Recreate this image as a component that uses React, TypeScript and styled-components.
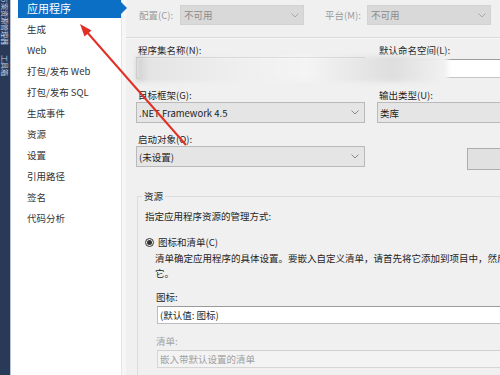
import React from "react";
import styled, { createGlobalStyle } from "styled-components";

const GlobalStyle = createGlobalStyle`
	html, body {
		margin: 0;
		padding: 0;
		background: #f0f0f0;
	}
	body {
		font-family: "Noto Sans CJK SC", "Noto Sans", sans-serif;
	}
`;

const navItems = [
	"应用程序",
	"生成",
	"Web",
	"打包/发布 Web",
	"打包/发布 SQL",
	"生成事件",
	"资源",
	"设置",
	"引用路径",
	"签名",
	"代码分析",
];

const Chevron = ({ color = "#888" }: { color?: string }) => (
	<svg width="8" height="5" viewBox="0 0 8 5">
		<polyline points="0.5,0.5 4,4 7.5,0.5" fill="none" stroke={color} strokeWidth="1" />
	</svg>
);

const App = () => {
	return (
		<>
			<GlobalStyle />
			<Window>
				<DockStrip>
					<DockTab>解决方案资源管理器</DockTab>
					<DockTab>工具箱</DockTab>
				</DockStrip>

				<Sidebar>
					<NavList>
						{navItems.map((item, i) => (
							<NavItem key={i} $active={i === 0}>
								{item}
							</NavItem>
						))}
					</NavList>
				</Sidebar>

				<Main>
					<TopBar>
						<TopLabel $width={44}>配置(C):</TopLabel>
						<DisabledCombo>
							不可用
							<Chevron color="#a8a8a8" />
						</DisabledCombo>
						<TopLabel $width={45} $gap={18}>平台(M):</TopLabel>
						<DisabledCombo>
							不可用
							<Chevron color="#a8a8a8" />
						</DisabledCombo>
					</TopBar>

					<Divider />

					<FieldGrid>
						<Field>
							<FieldLabel>程序集名称(N):</FieldLabel>
							<TextInput $height={22} />
						</Field>
						<Field>
							<FieldLabel>默认命名空间(L):</FieldLabel>
							<TextInput $height={19} $offset={2} />
						</Field>

						<Field>
							<FieldLabel>目标框架(G):</FieldLabel>
							<Select>
								.NET Framework 4.5
								<Chevron />
							</Select>
						</Field>
						<Field>
							<FieldLabel>输出类型(U):</FieldLabel>
							<Select>类库</Select>
						</Field>

						<Field>
							<FieldLabel>启动对象(O):</FieldLabel>
							<Select>
								(未设置)
								<Chevron />
							</Select>
						</Field>
						<Field>
							<SideButton />
						</Field>

						<Redaction />
					</FieldGrid>

					<GroupBox>
						<Legend>资源</Legend>
						<GroupText>指定应用程序资源的管理方式:</GroupText>
						<RadioRow>
							<Radio />
							图标和清单(C)
						</RadioRow>
						<Indent>
							<Description>
								清单确定应用程序的具体设置。要嵌入自定义清单，请首先将它添加到项目中，然后从以下列表中选择
								<br />
								它。
							</Description>
							<SubLabel>图标:</SubLabel>
							<TextBox>(默认值: 图标)</TextBox>
							<SubLabel $disabled>清单:</SubLabel>
							<TextBox $disabled>嵌入带默认设置的清单</TextBox>
						</Indent>
					</GroupBox>
				</Main>

				<Annotation width="500" height="375" viewBox="0 0 500 375">
					<line x1="186" y1="145" x2="86" y2="31" stroke="#e03028" strokeWidth="2" />
					<polygon points="80,24 91.5,30.5 84.5,36.5" fill="#e03028" />
				</Annotation>
			</Window>
		</>
	);
};

export default App;

const Window = styled.div`
	position: relative;
	display: flex;
	width: 500px;
	height: 375px;
	overflow: hidden;
	background: #f0f0f0;
	color: #1e1e1e;
`;

const DockStrip = styled.div`
	width: 10px;
	flex-shrink: 0;
	background: #293a58;
	border-right: 1px solid #b9c3d6;
	display: flex;
	flex-direction: column;
	align-items: center;
	gap: 10px;
	overflow: hidden;
`;

const DockTab = styled.div`
	writing-mode: vertical-rl;
	text-orientation: sideways;
	font-size: 7px;
	line-height: 10px;
	color: #c9d2e2;
	white-space: nowrap;
	&:first-child {
		margin-top: -18px;
	}
`;

const Sidebar = styled.div`
	width: 110px;
	flex-shrink: 0;
	background: #ffffff;
	border-right: 1px solid #e6e6e6;
	position: relative;
	z-index: 1;
`;

const NavList = styled.div`
	display: flex;
	flex-direction: column;
	margin-top: -3px;
	padding-left: 7px;
`;

const NavItem = styled.div<{ $active?: boolean }>`
	position: relative;
	height: 21px;
	display: flex;
	align-items: center;
	padding-left: 9px;
	font-size: ${(p) => (p.$active ? "11px" : "9.5px")};
	color: ${(p) => (p.$active ? "#ffffff" : "#333333")};
	background: ${(p) => (p.$active ? "#0c6fc6" : "transparent")};
	white-space: nowrap;

	${(p) =>
		p.$active &&
		`
		&::after {
			content: "";
			position: absolute;
			right: -6px;
			top: 50%;
			margin-top: -6px;
			border-top: 6px solid transparent;
			border-bottom: 6px solid transparent;
			border-left: 6px solid #0c6fc6;
		}
	`}
`;

const Main = styled.div`
	flex: 1;
	min-width: 0;
	overflow: hidden;
	background: #f0f0f0;
	border-left: 4px solid #f6f6f6;
	padding-left: 10px;
	font-size: 9.5px;
`;

const TopBar = styled.div`
	display: flex;
	align-items: center;
	height: 20px;
	margin-top: 5px;
`;

const TopLabel = styled.div<{ $width: number; $gap?: number }>`
	width: ${(p) => p.$width}px;
	flex-shrink: 0;
	box-sizing: border-box;
	padding-left: 3px;
	margin-left: ${(p) => p.$gap || 0}px;
	color: #9a9a9a;
	font-size: 9.5px;
	white-space: nowrap;
`;

const DisabledCombo = styled.div`
	width: 124px;
	height: 20px;
	flex-shrink: 0;
	box-sizing: border-box;
	display: flex;
	align-items: center;
	justify-content: space-between;
	padding: 0 4px 0 3px;
	background: #d9d9d9;
	border: 1px solid #d2d2d2;
	color: #8a8a8a;
`;

const Divider = styled.div`
	margin: 12px 0 0 -14px;
	border-top: 1px solid #dadada;
	border-bottom: 1px solid #f8f8f8;
`;

const FieldGrid = styled.div`
	position: relative;
	display: grid;
	grid-template-columns: 229px 220px;
	column-gap: 12px;
	row-gap: 9px;
	margin-top: 4px;
`;

const Field = styled.div`
	display: flex;
	flex-direction: column;
`;

const FieldLabel = styled.div`
	height: 14px;
	line-height: 14px;
	padding-left: 2px;
	white-space: nowrap;
	color: #1e1e1e;
`;

const TextInput = styled.div<{ $height: number; $offset?: number }>`
	height: ${(p) => p.$height}px;
	margin-top: ${(p) => p.$offset || 0}px;
	box-sizing: border-box;
	background: #ffffff;
	border: 1px solid #c4c4c4;
	border-top-color: #9c9c9c;
`;

const Select = styled.div`
	height: 21px;
	box-sizing: border-box;
	display: flex;
	align-items: center;
	justify-content: space-between;
	padding: 0 5px 0 2px;
	background: #e5e5e5;
	border: 1px solid #b9b9b9;
	color: #1e1e1e;
	white-space: nowrap;
`;

const SideButton = styled.div`
	margin: 16px 0 0 90px;
	width: 60px;
	height: 22px;
	box-sizing: border-box;
	background: #e1e1e1;
	border: 1px solid #adadad;
`;

const Redaction = styled.div`
	position: absolute;
	left: 0;
	top: 13px;
	width: 312px;
	height: 26px;
	background: linear-gradient(
		90deg,
		#cfcfcf 0%,
		#e4e4e4 4%,
		#eeeeee 30%,
		#f4f4f4 55%,
		#dedede 82%,
		#f2f2f2 100%
	);
	filter: blur(2px);
`;

const GroupBox = styled.fieldset`
	margin: 20px 0 0 1px;
	padding: 6px 0 0 7px;
	width: 420px;
	min-width: 0;
	border: 1px solid #dcdcdc;
	font-size: 9.5px;
`;

const Legend = styled.legend`
	margin-left: -3px;
	padding: 0 2px;
	line-height: 13px;
	font-size: 9.5px;
	color: #1e1e1e;
`;

const GroupText = styled.div`
	line-height: 14px;
	white-space: nowrap;
`;

const RadioRow = styled.div`
	margin-top: 12px;
	height: 14px;
	display: flex;
	align-items: center;
	gap: 4px;
	white-space: nowrap;
`;

const Radio = styled.span`
	width: 9px;
	height: 9px;
	box-sizing: border-box;
	border-radius: 50%;
	border: 1px solid #333;
	display: flex;
	align-items: center;
	justify-content: center;
	&::after {
		content: "";
		width: 5px;
		height: 5px;
		border-radius: 50%;
		background: #333;
	}
`;

const Indent = styled.div`
	padding-left: 11px;
	padding-bottom: 20px;
`;

const Description = styled.div`
	margin-top: 2px;
	margin-left: -1px;
	line-height: 15px;
	white-space: nowrap;
`;

const SubLabel = styled.div<{ $disabled?: boolean }>`
	margin-top: ${(p) => (p.$disabled ? 10 : 9)}px;
	line-height: 14px;
	color: ${(p) => (p.$disabled ? "#a3a3a3" : "#1e1e1e")};
`;

const TextBox = styled.div<{ $disabled?: boolean }>`
	margin: 2px 0 0 1px;
	height: 18px;
	box-sizing: border-box;
	display: flex;
	align-items: center;
	padding-left: 2px;
	background: ${(p) => (p.$disabled ? "#f3f3f3" : "#ffffff")};
	border: 1px solid ${(p) => (p.$disabled ? "#d6d6d6" : "#bdbdbd")};
	border-top-color: ${(p) => (p.$disabled ? "#d0d0d0" : "#9a9a9a")};
	color: ${(p) => (p.$disabled ? "#a0a0a0" : "#1e1e1e")};
	white-space: nowrap;
`;

const Annotation = styled.svg`
	position: absolute;
	left: 0;
	top: 0;
	pointer-events: none;
	z-index: 5;
`;
